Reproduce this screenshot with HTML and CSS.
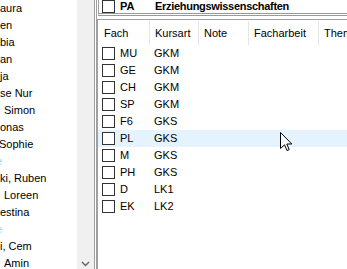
FILE: index.html
```html
<!DOCTYPE html>
<html lang="de">
<head>
  <meta charset="UTF-8">
  <title>Kurswahl</title>
  <link rel="stylesheet" href="styles.css">
</head>
<body>

  <div class="window">
    <div class="names">
      <ul class="name-list">
        <li>aura</li>
        <li>en</li>
        <li>bia</li>
        <li>an</li>
        <li>ja</li>
        <li>se Nur</li>
        <li class="indent">Simon</li>
        <li>onas</li>
        <li class="cut">Sophie</li>
        <li class="inactive"><span>e</span></li>
        <li>ki, Ruben</li>
        <li class="indent">Loreen</li>
        <li>estina</li>
        <li class="inactive"><span>e</span></li>
        <li>i, Cem</li>
        <li class="indent">Amin</li>
      </ul>
    </div>

    <div class="vscroll">
      <svg class="arrow-down" width="9" height="6" viewBox="0 0 9 6">
        <path d="M1 1 L4.5 4.5 L8 1" fill="none" stroke="#606060" stroke-width="1.3"/>
      </svg>
    </div>

    <div class="splitter"></div>

    <div class="detail">
      <div class="subject-head">
        <span class="check"></span>
        <span class="code">PA</span>
        <span class="title">Erziehungswissenschaften</span>
      </div>

      <div class="courses">
        <div class="course-row header">
          <div class="cell">Fach</div>
          <div class="cell">Kursart</div>
          <div class="cell">Note</div>
          <div class="cell">Facharbeit</div>
          <div class="cell">Thema</div>
        </div>
        <div class="course-row"><div class="cell"><span class="check"></span>MU</div><div class="cell">GKM</div></div>
        <div class="course-row"><div class="cell"><span class="check"></span>GE</div><div class="cell">GKM</div></div>
        <div class="course-row"><div class="cell"><span class="check"></span>CH</div><div class="cell">GKM</div></div>
        <div class="course-row"><div class="cell"><span class="check"></span>SP</div><div class="cell">GKM</div></div>
        <div class="course-row"><div class="cell"><span class="check"></span>F6</div><div class="cell">GKS</div></div>
        <div class="course-row hover"><div class="cell"><span class="check"></span>PL</div><div class="cell">GKS</div></div>
        <div class="course-row"><div class="cell"><span class="check"></span>M</div><div class="cell">GKS</div></div>
        <div class="course-row"><div class="cell"><span class="check"></span>PH</div><div class="cell">GKS</div></div>
        <div class="course-row"><div class="cell"><span class="check"></span>D</div><div class="cell">LK1</div></div>
        <div class="course-row"><div class="cell"><span class="check"></span>EK</div><div class="cell">LK2</div></div>
      </div>
    </div>

    <svg class="cursor" width="13" height="20" viewBox="0 0 13 20">
      <path d="M0.5 0.5 L0.5 16.5 L4.5 12.8 L7 18.5 L9.2 17.6 L6.8 12 L11.8 12 Z" fill="#fff" stroke="#000" stroke-width="1" stroke-linejoin="miter"/>
    </svg>
  </div>

</body>
</html>
```

FILE: styles.css
```css
body {
  margin: 0;
  padding: 0;
  font-family: "Liberation Sans", Arial, sans-serif;
  font-size: 11px;
  color: #000;
  background: #fff;
  overflow: hidden;
}

.window {
  position: relative;
  display: flex;
  width: 347px;
  height: 269px;
  overflow: hidden;
}

/* Schülerliste links */
.names {
  width: 77px;
  flex-shrink: 0;
  overflow: hidden;
  background: #fff;
}

.name-list {
  list-style: none;
  margin: 0;
  padding: 0;
}

.name-list li {
  height: 17px;
  line-height: 17px;
  white-space: nowrap;
}

.name-list li.indent {
  padding-left: 4px;
}

.name-list li.cut {
  margin-left: -1px;
}

.name-list li.inactive span {
  display: inline-block;
  margin-left: -4px;
  color: #8fd6ee;
}

.vscroll {
  width: 17px;
  flex-shrink: 0;
  background: #f0f0f0;
  display: flex;
  flex-direction: column;
  justify-content: flex-end;
  align-items: center;
}

.arrow-down {
  margin-bottom: 2px;
}

.splitter {
  width: 1px;
  flex-shrink: 0;
  background: #fff;
  border-left: 1px solid #a0a0a0;
  border-right: 1px solid #a0a0a0;
}

/* Detailbereich rechts */
.detail {
  flex: 1;
  overflow: hidden;
  display: flex;
  flex-direction: column;
}

.check {
  display: inline-block;
  box-sizing: border-box;
  width: 13px;
  height: 13px;
  border: 1px solid #333;
  background: #fff;
  flex-shrink: 0;
}

.subject-head {
  display: flex;
  align-items: flex-start;
  height: 13px;
  margin-left: 1px;
  padding-left: 3px;
  border-left: 1px solid #a0a0a0;
  border-bottom: 3px double #999;
  font-weight: bold;
  line-height: 13px;
  white-space: nowrap;
}

.subject-head .check {
  margin-right: 5px;
}

.subject-head .code {
  width: 35px;
}

.subject-head .title {
  letter-spacing: -0.3px;
}

.courses {
  flex: 1;
  margin-top: 3px;
  border-top: 1px solid #a0a0a0;
  border-left: 1px solid #a0a0a0;
}

.course-row {
  display: grid;
  grid-template-columns: 52px 49px 50px 70px 1fr;
  height: 17px;
  line-height: 17px;
  white-space: nowrap;
}

.course-row .cell {
  display: flex;
  align-items: center;
  padding-left: 4px;
  overflow: hidden;
}

.course-row .check {
  margin-right: 5px;
}

.course-row.hover {
  background: #e5f3ff;
}

.course-row.header {
  height: 25px;
  line-height: 25px;
}

.course-row.header .cell {
  display: block;
  padding-left: 5px;
  margin-top: 1px;
  border-right: 1px solid #e5e5e5;
}

.course-row.header .cell:first-child {
  padding-left: 6px;
}

.course-row.header .cell:last-child {
  border-right: none;
}

.cursor {
  position: absolute;
  left: 280px;
  top: 132px;
}
```
